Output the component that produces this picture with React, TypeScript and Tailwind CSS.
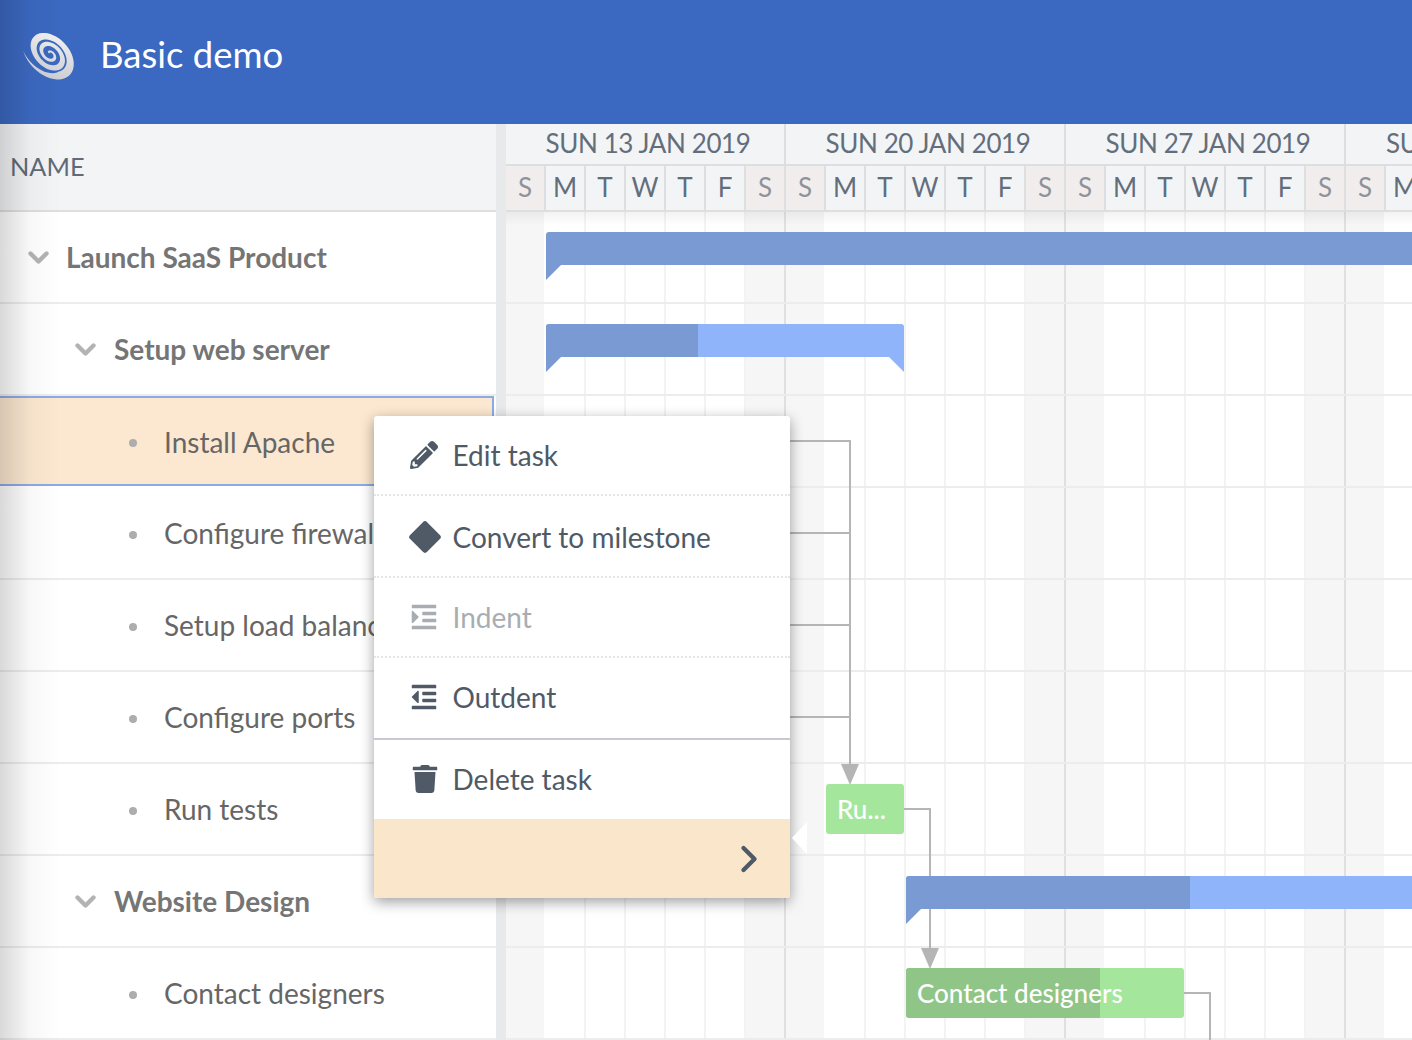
import { FaIndent, FaOutdent, FaPencilAlt, FaTrash } from "react-icons/fa";
import { ChevronRight } from "lucide-react";
import type { ReactNode } from "react";

const rows = [
    { name: "Launch SaaS Product", level: 0, parent: true },
    { name: "Setup web server", level: 1, parent: true },
    { name: "Install Apache", level: 2, selected: true },
    { name: "Configure firewall", level: 2 },
    { name: "Setup load balancer", level: 2 },
    { name: "Configure ports", level: 2 },
    { name: "Run tests", level: 2 },
    { name: "Website Design", level: 1, parent: true },
    { name: "Contact designers", level: 2 },
];

const weeks = ["SUN 13 JAN 2019", "SUN 20 JAN 2019", "SUN 27 JAN 2019", "SUN 03 FEB 2019"];
const days = ["S", "M", "T", "W", "T", "F", "S"];

// tilted spiral band for the logo, gets wider towards the outside
function spiralPath() {
    const outer: string[] = [];
    const inner: string[] = [];
    const steps = 140;
    for (let i = 0; i <= steps; i++) {
        const t = i / steps;
        const a = t * Math.PI * 2 * 2.9 + 2.9;
        const r = 2.5 + 30 * t;
        const w = (2 + 7.5 * t) * (i > steps - 14 ? (steps - i) / 14 : 1);
        const px = (rad: number) => `${(Math.cos(a) * rad).toFixed(2)},${(Math.sin(a) * rad * 0.68).toFixed(2)}`;
        outer.push(px(r));
        inner.unshift(px(r - w));
    }
    return "M" + outer.join("L") + "L" + inner.join("L") + "Z";
}

function Logo() {
    return (
        <svg width="54" height="54" viewBox="-27 -27 54 54" className="shrink-0">
            <defs>
                <linearGradient id="lg" x1="0" y1="0" x2="1" y2="1">
                    <stop offset="0" stopColor="#f6f6f6" />
                    <stop offset="1" stopColor="#c4c7cd" />
                </linearGradient>
            </defs>
            <g transform="rotate(45)">
                <path d={spiralPath()} fill="url(#lg)" />
            </g>
        </svg>
    );
}

function RowChevron({ nested }: { nested: boolean }) {
    return (
        <svg width="21" height="14" viewBox="0 0 21 14" className={`shrink-0 mt-[2px] ${nested ? "-ml-[1px] mr-[18px]" : "mr-[17px]"}`}>
            <polyline points="2.5,2.5 10.5,10.5 18.5,2.5" fill="none" stroke="#b3b3b3" strokeWidth="4.4" strokeLinecap="round" strokeLinejoin="round" />
        </svg>
    );
}

function TaskRow({ name, level, parent, selected }: { name: string; level: number; parent?: boolean; selected?: boolean }) {
    const pad = level === 0 ? "pl-[28px]" : level === 1 ? "pl-[76px]" : "pl-[129px]";
    return (
        <div
            className={`flex items-center shrink-0 ${pad} ${
                selected
                    ? "bg-[#fce8d0] border-y-2 border-r-2 border-[#8caae6] mr-[2px] h-[90px] mb-[2px] pt-[2px]"
                    : "h-[92px] bg-white border-b-2 border-[#ececec]"
            }`}
        >
            {parent ? (
                <RowChevron nested={level === 1} />
            ) : (
                <span className={`w-[8px] h-[8px] rounded-full bg-[#adadad] mr-[27px] shrink-0 ${selected ? "mt-[1px]" : "mt-[4px]"}`} />
            )}
            <span className={`text-[28px] whitespace-nowrap ${parent ? "font-bold text-[#757575]" : "text-[#666666]"}`}>{name}</span>
        </div>
    );
}

function MenuItem({ icon, label, disabled, className }: { icon: ReactNode; label: string; disabled?: boolean; className: string }) {
    return (
        <div className={`flex items-center pl-[35px] ${disabled ? "text-[#a9adb2]" : "text-[#4f5a66]"} ${className}`}>
            <span className="w-[43.5px] flex items-center shrink-0">{icon}</span>
            <span className="text-[28px]">{label}</span>
        </div>
    );
}

function GridColumns() {
    const cols = Array.from({ length: 23 }, (_, i) => i);
    return (
        <div className="flex [grid-area:1/1] h-full">
            {cols.map((i) => {
                const d = i % 7;
                const weekend = d === 0 || d === 6;
                return (
                    <div
                        key={i}
                        className={`w-[40px] shrink-0 border-r-2 ${d === 6 ? "border-[#e0e0e0]" : d === 0 ? "border-white" : "border-[#f3f3f3]"} ${
                            weekend ? "bg-[#f6f6f6]" : "bg-white"
                        }`}
                    />
                );
            })}
        </div>
    );
}

function BlueBar({ x, y, w, done, right }: { x: number; y: number; w: number; done: number; right?: boolean }) {
    return (
        <div className="absolute h-[48px]" style={{ left: x, top: y, width: w }}>
            <div className="h-[33px] flex overflow-hidden rounded-t-[3px] bg-[#8fb4fa]">
                <div className="h-full bg-[#7a9ad4]" style={{ width: done }} />
            </div>
            <svg width="15" height="15" className="absolute left-0 top-[33px]">
                <polygon points="0,0 15,0 0,15" fill="#7a9ad4" />
            </svg>
            {right && (
                <svg width="15" height="15" className="absolute right-0 top-[33px]">
                    <polygon points="0,0 15,0 15,15" fill="#8fb4fa" />
                </svg>
            )}
        </div>
    );
}

function GreenBar({ x, y, w, done, label }: { x: number; y: number; w: number; done: number; label: string }) {
    return (
        <div className="absolute h-[50px] rounded-[3px] overflow-hidden bg-[#a5e69d]" style={{ left: x, top: y, width: w }}>
            <div className="absolute inset-y-0 left-0 bg-[#8fc587]" style={{ width: done }} />
            <span className="absolute left-[11px] top-0 leading-[50px] text-[26px] font-medium text-white whitespace-nowrap">{label}</span>
        </div>
    );
}

function TaskMenu() {
    return (
        <div className="absolute left-[374px] top-[416px] w-[416px] h-[482px] z-20 bg-white rounded-[3px] shadow-[0_4px_14px_rgba(0,0,0,0.38)] flex flex-col">
            <MenuItem
                className="h-[80px] border-b-2 border-dotted border-[#e4e5e7]"
                icon={<FaPencilAlt className="text-[28px] ml-[1px]" />}
                label="Edit task"
            />
            <MenuItem
                className="h-[82px] pt-[2px] border-b-2 border-dotted border-[#e4e5e7]"
                icon={<span className="block w-[24px] h-[24px] rotate-45 rounded-[3px] bg-[#4f5a66] ml-[4px]" />}
                label="Convert to milestone"
            />
            <MenuItem
                className="h-[80px] border-b-2 border-dotted border-[#e4e5e7]"
                disabled
                icon={<FaIndent className="text-[28px] ml-[1px]" />}
                label="Indent"
            />
            <MenuItem
                className="h-[82px] pb-[2px] border-b-2 border-[#c8c8d2]"
                icon={<FaOutdent className="text-[28px] ml-[1px]" />}
                label="Outdent"
            />
            <MenuItem className="h-[79px] pb-[2px]" icon={<FaTrash className="text-[28px] ml-[2px]" />} label="Delete task" />
            <div className="flex-1 bg-[#fae7cb] rounded-b-[3px] flex items-center justify-end pr-[19px] text-[#4f5a66]">
                <ChevronRight size={44} strokeWidth={2.4} />
            </div>
            <svg width="15" height="32" className="absolute left-[418px] top-[406px]">
                <polygon points="0,16 15,0 15,32" fill="#ffffff" />
            </svg>
        </div>
    );
}

export default function App() {
    return (
        <div className="relative w-[1412px] h-[1040px] overflow-hidden bg-white [font-family:Lato,sans-serif]">
            <header className="h-[124px] bg-[#3b68c0] flex items-center pl-[23px] pb-[16px]">
                <Logo />
                <h1 className="ml-[23px] text-[36.5px] text-white leading-none">Basic demo</h1>
            </header>

            <div className="flex h-[916px]">
                <div className="w-[496px] shrink-0 flex flex-col overflow-hidden">
                    <div className="h-[88px] shrink-0 bg-[#f3f4f6] border-b-2 border-[#dcdee0] flex items-center pl-[10px] text-[25.3px] text-[#5f6b78]">
                        NAME
                    </div>
                    {rows.map((r) => (
                        <TaskRow key={r.name} {...r} />
                    ))}
                </div>

                <div className="w-[10px] shrink-0 bg-[#e8e9eb]" />

                <div className="flex-1 min-w-0 overflow-hidden flex flex-col">
                    <div className="h-[88px] shrink-0 bg-[#f3f4f6] border-b-2 border-[#dcdee0] text-[#636e7b]">
                        <div className="h-[42px] flex border-b-2 border-[#dcdee0]">
                            {weeks.map((w) => (
                                <div
                                    key={w}
                                    className="w-[280px] shrink-0 border-r-2 border-[#dcdee0] pl-[6px] text-center text-[26px] tracking-[-0.4px] leading-[38px] whitespace-nowrap"
                                >
                                    {w}
                                </div>
                            ))}
                        </div>
                        <div className="h-[44px] flex">
                            {weeks.flatMap((w) =>
                                days.map((d, i) => {
                                    const weekend = i === 0 || i === 6;
                                    return (
                                        <div
                                            key={w + i}
                                            className={`w-[40px] shrink-0 border-r-2 border-[#dcdee0] text-center text-[26px] leading-[42px] ${
                                                weekend ? "bg-[#f1eded] text-[#8d929b]" : ""
                                            }`}
                                        >
                                            {d}
                                        </div>
                                    );
                                })
                            )}
                        </div>
                    </div>

                    <div className="relative flex-1 grid">
                        <GridColumns />
                        <div className="[grid-area:1/1] flex flex-col">
                            {rows.map((r) => (
                                <div key={r.name} className="h-[92px] shrink-0 border-b-2 border-[#ececec]" />
                            ))}
                        </div>
                        <div className="absolute inset-x-0 top-0 h-[14px] bg-gradient-to-b from-black/5 to-transparent" />

                        <svg width="906" height="828" className="absolute left-0 top-0" fill="none" stroke="#b5b5b5" strokeWidth="2">
                            <path d="M280 229H344V556M280 321H344M280 413H344M280 505H344" />
                            <path d="M398 597H424V740" />
                            <path d="M678 781H704V828" />
                            <polygon points="335,552 353,552 344,573" fill="#b5b5b5" stroke="none" />
                            <polygon points="415,736 433,736 424,757" fill="#b5b5b5" stroke="none" />
                        </svg>

                        <BlueBar x={40} y={20} w={906} done={906} />
                        <BlueBar x={40} y={112} w={358} done={152} right />
                        <BlueBar x={400} y={664} w={540} done={284} />
                        <GreenBar x={320} y={572} w={78} done={0} label="Ru..." />
                        <GreenBar x={400} y={756} w={278} done={194} label="Contact designers" />
                    </div>
                </div>
            </div>

            <div className="absolute left-0 inset-y-0 w-[60px] bg-gradient-to-r from-black/15 via-black/[0.03] to-transparent pointer-events-none" />
            <TaskMenu />
        </div>
    );
}
